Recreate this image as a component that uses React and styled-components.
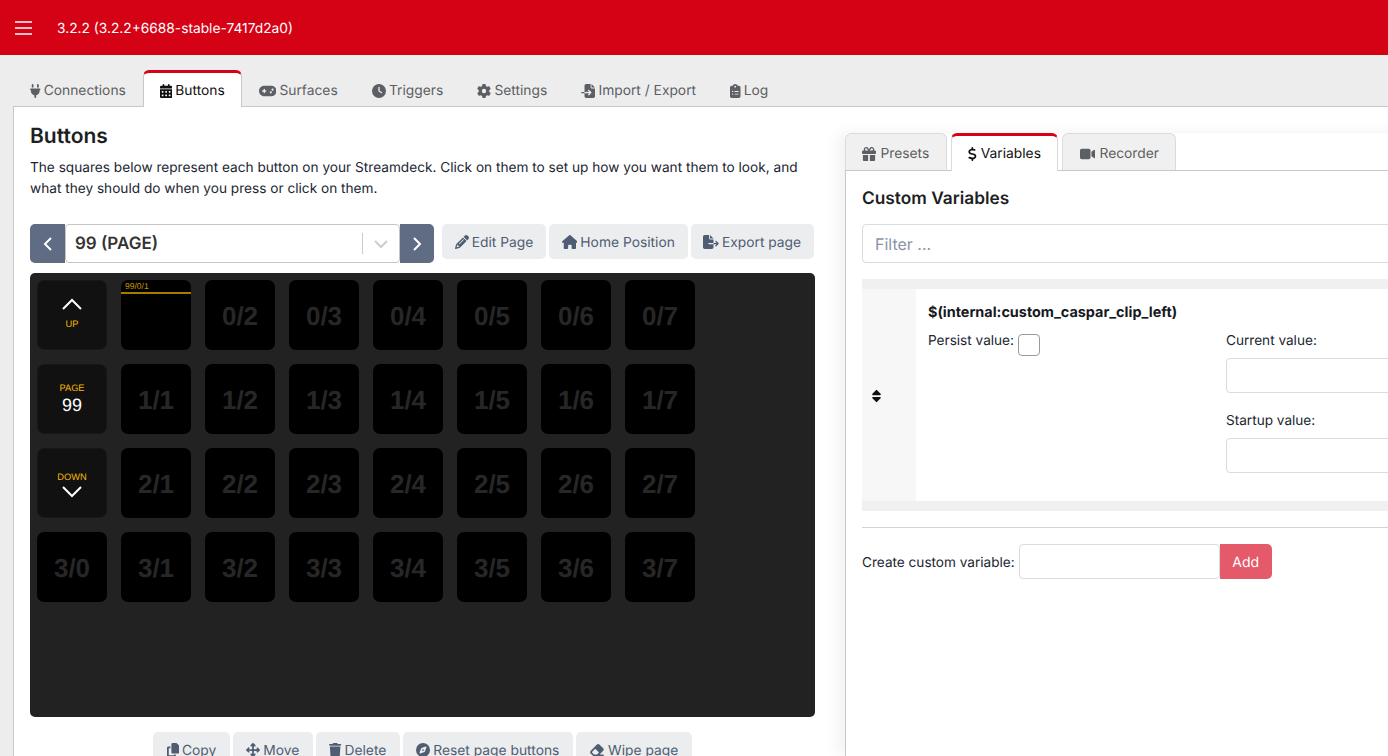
import React from 'react'
import styled, { createGlobalStyle } from 'styled-components'
import {
  FaPlug, FaCalendarDays, FaGamepad, FaClock, FaGear, FaFileImport, FaClipboardList,
  FaGift, FaDollarSign, FaVideo, FaPencil, FaHouse, FaFileExport, FaCopy,
  FaArrowsUpDownLeftRight, FaTrash, FaCompass, FaEraser, FaSort,
} from 'react-icons/fa6'

const GlobalStyle = createGlobalStyle`
  html, body {
    margin: 0;
    height: 756px;
    overflow: hidden;
    background: #ededed;
    font-family: Inter, "Liberation Sans", sans-serif;
    font-size: 14px;
    color: #212631;
    text-rendering: geometricPrecision;
  }
  * { box-sizing: border-box; }
`

const Header = styled.header`
  height: 55px;
  background: #d50215;
  display: flex;
  align-items: center;
  padding-left: 15px;
  color: #fff;
`
const Version = styled.span`
  margin-left: 25px;
  padding-top: 2px;
  font-size: 13.75px;
`
const MainTabs = styled.nav`
  height: 51px;
  padding: 15px 0 0 13px;
  display: flex;
  align-items: flex-start;
`
const Tab = styled.div`
  display: flex;
  align-items: center;
  gap: 3.2px;
  height: 37px;
  padding: 2px 16px 0;
  font-size: 13.8px;
  border: 1px solid transparent;
  border-bottom: none;
  border-top: 3px solid ${({ $active }) => ($active ? '#d50215' : 'transparent')};
  border-radius: 6px 6px 0 0;
  color: ${({ $active }) => ($active ? '#111' : '#5c5f63')};
  background: ${({ $active }) => ($active ? '#fff' : 'transparent')};
  border-left-color: ${({ $active }) => ($active ? '#c4c9d0' : 'transparent')};
  border-right-color: ${({ $active }) => ($active ? '#c4c9d0' : 'transparent')};
  white-space: nowrap;
  z-index: 1;
  flex: none;
  svg { height: 14px; width: ${({ $iconW }) => $iconW}px; flex: none; }
`
const Page = styled.main`
  margin-left: 13px;
  width: 1500px;
  height: 650px;
  background: #fff;
  border-left: 1px solid #c4c9d0;
  border-top: 1px solid #c4c9d0;
  padding: 17px 0 0 16px;
  display: flex;
  gap: 30px;
  overflow: hidden;
`
const LeftColumn = styled.section`
  width: 785px;
  flex: none;
`
const Title = styled.h1`
  margin: 0;
  font-size: 21px;
  line-height: 26px;
  font-weight: 600;
  color: #1d1f23;
`
const Description = styled.p`
  margin: 8px 0 24px;
  font-size: 13.65px;
  line-height: 21px;
`
const PageBar = styled.div`
  display: flex;
  align-items: flex-start;
`
const Arrow = styled.div`
  width: ${({ $w }) => $w}px;
  height: 39px;
  flex: none;
  background: #606c83;
  color: #fff;
  display: flex;
  align-items: center;
  justify-content: center;
  border-radius: ${({ $right }) => ($right ? '0 5px 5px 0' : '5px 0 0 5px')};
`
const PageSelect = styled.div`
  width: 335px;
  height: 39px;
  flex: none;
  background: #fff;
  border: 1px solid #c5c5c5;
  border-radius: 4px;
  display: flex;
  align-items: center;
  padding-left: 9px;
  font-size: 17px;
  font-weight: 600;
  color: #333;
`
const SelectLabel = styled.span`
  flex: 1;
`
const SelectDivider = styled.span`
  width: 1px;
  height: 21px;
  background: #ccc;
`
const SelectCaret = styled.span`
  width: 36px;
  display: flex;
  justify-content: center;
  color: #ccc;
`
const ActionGroup = styled.div`
  display: flex;
  gap: 3px;
  margin-left: ${({ $left }) => $left || 0}px;
  justify-content: ${({ $center }) => ($center ? 'center' : 'flex-start')};
`
const ActionButton = styled.div`
  height: 35px;
  padding: 2px ${({ $pad }) => $pad}px 0;
  display: flex;
  align-items: center;
  gap: 3px;
  border-radius: 5px;
  background: #ebedef;
  color: #4f5d73;
  font-size: 13.8px;
  white-space: nowrap;
  flex: none;
  svg { height: 14px; width: ${({ $iconW }) => $iconW}px; margin-top: -2px; flex: none; }
`
const Deck = styled.div`
  margin-top: 10px;
  height: 444px;
  background: #222;
  border-radius: 5px;
  padding: 7px;
  display: grid;
  grid-template-columns: repeat(8, 70px);
  grid-auto-rows: 70px;
  gap: 14px;
`
const Cell = styled.div`
  position: relative;
  overflow: hidden;
  border-radius: 7px;
  background: ${({ $nav }) => ($nav ? '#111' : '#000')};
  border: ${({ $nav }) => ($nav ? '1px solid #181818' : 'none')};
  padding-top: ${({ $drop }) => $drop || 0}px;
  padding-bottom: ${({ $lift }) => $lift || 0}px;
  display: flex;
  flex-direction: column;
  align-items: center;
  justify-content: center;
  font-family: Arial, "Liberation Sans", sans-serif;
`
const CellId = styled.span`
  margin-top: 2px;
  font-size: 26px;
  font-weight: 700;
  color: #272727;
`
const NavLabel = styled.span`
  font-size: 9.3px;
  line-height: 11px;
  color: #f5b800;
  margin-top: ${({ $top }) => $top || 0}px;
  margin-bottom: ${({ $bottom }) => $bottom || 0}px;
`
const NavNumber = styled.span`
  font-size: 18px;
  line-height: 22px;
  color: #fff;
`
const CellHeader = styled.div`
  position: absolute;
  top: 0;
  left: 0;
  right: 0;
  height: 14px;
  padding-left: 4px;
  font-size: 8.5px;
  line-height: 13px;
  color: #c99700;
  border-bottom: 2px solid #a67c00;
`
const Bottom = styled.div`
  margin-top: 15px;
`
const RightColumn = styled.section`
  margin-top: 9px;
  width: 640px;
  flex: none;
  box-shadow: -8px 0 14px rgba(0, 0, 0, 0.05);
`
const SideTabs = styled.div`
  display: flex;
  gap: 4px;
  height: 37px;
  align-items: flex-start;
  background: #fff;
`
const SideTab = styled(Tab)`
  gap: 4px;
  background: ${({ $active }) => ($active ? '#fff' : '#f0f0f0')};
  border-color: #d8dbe0;
  border-top: ${({ $active }) => ($active ? '3px solid #d50215' : '1px solid #d8dbe0')};
  padding: ${({ $active }) => ($active ? 0 : 4)}px 16.4px 0;
  height: ${({ $active }) => ($active ? 38 : 37)}px;
`
const SidePanel = styled.div`
  border-left: 1px solid #c4c9d0;
  border-top: 1px solid #c4c9d0;
  padding: 16px;
  height: 600px;
`
const SideTitle = styled.h2`
  margin: 1px 0 14px;
  font-size: 17.3px;
  line-height: 22px;
  font-weight: 600;
  color: #1d1f23;
`
const FilterInput = styled.div`
  height: 39px;
  border: 1px solid #d8dbe0;
  border-radius: 4px;
  padding-left: 12px;
  display: flex;
  align-items: center;
  font-size: 16px;
  color: #8a93a8;
`
const VarTable = styled.div`
  margin-top: 16px;
  padding: 10px 0;
  background: #f0f0f0;
`
const VarRow = styled.div`
  display: flex;
  height: 212px;
  background: #fff;
`
const DragCell = styled.div`
  width: 54px;
  flex: none;
  background: #f7f7f7;
  color: #111;
  display: flex;
  align-items: center;
  padding: 2px 0 0 10px;
  svg { height: 14px; width: 9px; }
`
const VarBody = styled.div`
  padding: 13px 12px 12px;
  flex: 1;
  font-size: 13.6px;
`
const VarName = styled.div`
  font-weight: 700;
  font-size: 14.4px;
  line-height: 22px;
  color: #16181d;
`
const VarFields = styled.div`
  margin-top: 6px;
  display: flex;
`
const Persist = styled.div`
  width: 298px;
  flex: none;
  display: flex;
  align-items: flex-start;
  gap: 4px;
  line-height: 22px;
`
const Checkbox = styled.span`
  margin-top: 4px;
  width: 22px;
  height: 22px;
  border: 1px solid #9a9a9a;
  border-radius: 4px;
`
const ValueField = styled.div`
  display: flex;
  flex-direction: column;
  width: 300px;
`
const FieldLabel = styled.label`
  line-height: 22px;
  height: 28px;
`
const TextBox = styled.div`
  width: ${({ $w }) => $w || 300}px;
  height: 35px;
  border: 1px solid #d8dbe0;
  border-radius: 4px;
  background: #fff;
  flex: none;
`
const FieldGap = styled.div`
  height: 17px;
`
const Rule = styled.hr`
  margin: 16px 0;
  border: 0;
  border-top: 1px solid #d0d3d8;
`
const CreateRow = styled.div`
  display: flex;
  align-items: center;
`
const CreateLabel = styled.span`
  font-size: 13.6px;
  margin-right: 4px;
  padding-top: 2px;
`
const AddButton = styled.div`
  width: 52px;
  height: 35px;
  padding-top: 2px;
  background: #e55a6b;
  color: #fff;
  border-radius: 0 5px 5px 0;
  display: flex;
  align-items: center;
  justify-content: center;
`

const Chevron = ({ d }) => (
  <svg width="20" height="12" viewBox="0 0 20 12" fill="none" stroke="#fff" strokeWidth="2">
    <path d={d} />
  </svg>
)

const mainTabs = [
  { icon: FaPlug, w: 10.5, label: 'Connections' },
  { icon: FaCalendarDays, w: 12.25, label: 'Buttons', active: true },
  { icon: FaGamepad, w: 17.5, label: 'Surfaces' },
  { icon: FaClock, w: 14, label: 'Triggers' },
  { icon: FaGear, w: 14, label: 'Settings' },
  { icon: FaFileImport, w: 14, label: 'Import / Export' },
  { icon: FaClipboardList, w: 10.5, label: 'Log' },
]

const pageActions = [
  { icon: FaPencil, w: 14, label: 'Edit Page' },
  { icon: FaHouse, w: 15.75, label: 'Home Position' },
  { icon: FaFileExport, w: 15.75, label: 'Export page' },
]

const bottomActions = [
  { icon: FaCopy, w: 12.25, label: 'Copy' },
  { icon: FaArrowsUpDownLeftRight, w: 14, label: 'Move' },
  { icon: FaTrash, w: 12.25, label: 'Delete' },
  { icon: FaCompass, w: 14, label: 'Reset page buttons' },
  { icon: FaEraser, w: 15.75, label: 'Wipe page' },
]

const renderCell = (row, col) => {
  if (col === 0 && row === 0) {
    return (
      <Cell $nav $lift={2} key="up">
        <Chevron d="M1 11 L10 2 L19 11" />
        <NavLabel $top={9}>UP</NavLabel>
      </Cell>
    )
  }
  if (col === 0 && row === 1) {
    return (
      <Cell $nav key="page">
        <NavLabel>PAGE</NavLabel>
        <NavNumber>99</NavNumber>
      </Cell>
    )
  }
  if (col === 0 && row === 2) {
    return (
      <Cell $nav $drop={4} key="down">
        <NavLabel $bottom={3}>DOWN</NavLabel>
        <Chevron d="M1 1 L10 10 L19 1" />
      </Cell>
    )
  }
  if (row === 0 && col === 1) {
    return (
      <Cell key="0-1">
        <CellHeader>99/0/1</CellHeader>
      </Cell>
    )
  }
  return (
    <Cell key={`${row}-${col}`}>
      <CellId>{row}/{col}</CellId>
    </Cell>
  )
}

export default function App() {
  return (
    <>
      <GlobalStyle />
      <Header>
        <svg width="17" height="14" viewBox="0 0 17 14" fill="none" stroke="#fff" strokeWidth="1.4">
          <path d="M0 1 H17 M0 7 H17 M0 13 H17" />
        </svg>
        <Version>3.2.2 (3.2.2+6688-stable-7417d2a0)</Version>
      </Header>
      <MainTabs>
        {mainTabs.map(({ icon: Icon, w, label, active }) => (
          <Tab key={label} $active={active} $iconW={w}>
            <Icon />
            {label}
          </Tab>
        ))}
      </MainTabs>
      <Page>
        <LeftColumn>
          <Title>Buttons</Title>
          <Description>
            The squares below represent each button on your Streamdeck. Click on them to set up how you want them to look, and what they should do when you press or click on them.
          </Description>
          <PageBar>
            <Arrow $w={35}>
              <svg width="10" height="14" viewBox="0 0 10 14" fill="none" stroke="#fff" strokeWidth="2"><path d="M8 1 L2 7 L8 13" /></svg>
            </Arrow>
            <PageSelect>
              <SelectLabel>99 (PAGE)</SelectLabel>
              <SelectDivider />
              <SelectCaret>
                <svg width="14" height="8" viewBox="0 0 14 8" fill="none" stroke="#ccc" strokeWidth="2"><path d="M1 1 L7 7 L13 1" /></svg>
              </SelectCaret>
            </PageSelect>
            <Arrow $w={34} $right>
              <svg width="10" height="14" viewBox="0 0 10 14" fill="none" stroke="#fff" strokeWidth="2"><path d="M2 1 L8 7 L2 13" /></svg>
            </Arrow>
            <ActionGroup $left={8}>
              {pageActions.map(({ icon: Icon, w, label }) => (
                <ActionButton key={label} $iconW={w} $pad={12.7}><Icon />{label}</ActionButton>
              ))}
            </ActionGroup>
          </PageBar>
          <Deck>
            {[0, 1, 2, 3].map((row) => [0, 1, 2, 3, 4, 5, 6, 7].map((col) => renderCell(row, col)))}
          </Deck>
          <Bottom>
            <ActionGroup $center>
              {bottomActions.map(({ icon: Icon, w, label }) => (
                <ActionButton key={label} $iconW={w} $pad={13.5}><Icon />{label}</ActionButton>
              ))}
            </ActionGroup>
          </Bottom>
        </LeftColumn>
        <RightColumn>
          <SideTabs>
            <SideTab $iconW={14}><FaGift />Presets</SideTab>
            <SideTab $active $iconW={8.75}><FaDollarSign />Variables</SideTab>
            <SideTab $iconW={15.75}><FaVideo />Recorder</SideTab>
          </SideTabs>
          <SidePanel>
            <SideTitle>Custom Variables</SideTitle>
            <FilterInput>Filter ...</FilterInput>
            <VarTable>
              <VarRow>
                <DragCell><FaSort /></DragCell>
                <VarBody>
                  <VarName>$(internal:custom_caspar_clip_left)</VarName>
                  <VarFields>
                    <Persist>Persist value: <Checkbox /></Persist>
                    <ValueField>
                      <FieldLabel>Current value:</FieldLabel>
                      <TextBox />
                      <FieldGap />
                      <FieldLabel>Startup value:</FieldLabel>
                      <TextBox />
                    </ValueField>
                  </VarFields>
                </VarBody>
              </VarRow>
            </VarTable>
            <Rule />
            <CreateRow>
              <CreateLabel>Create custom variable:</CreateLabel>
              <TextBox $w={201} />
              <AddButton>Add</AddButton>
            </CreateRow>
          </SidePanel>
        </RightColumn>
      </Page>
    </>
  )
}
